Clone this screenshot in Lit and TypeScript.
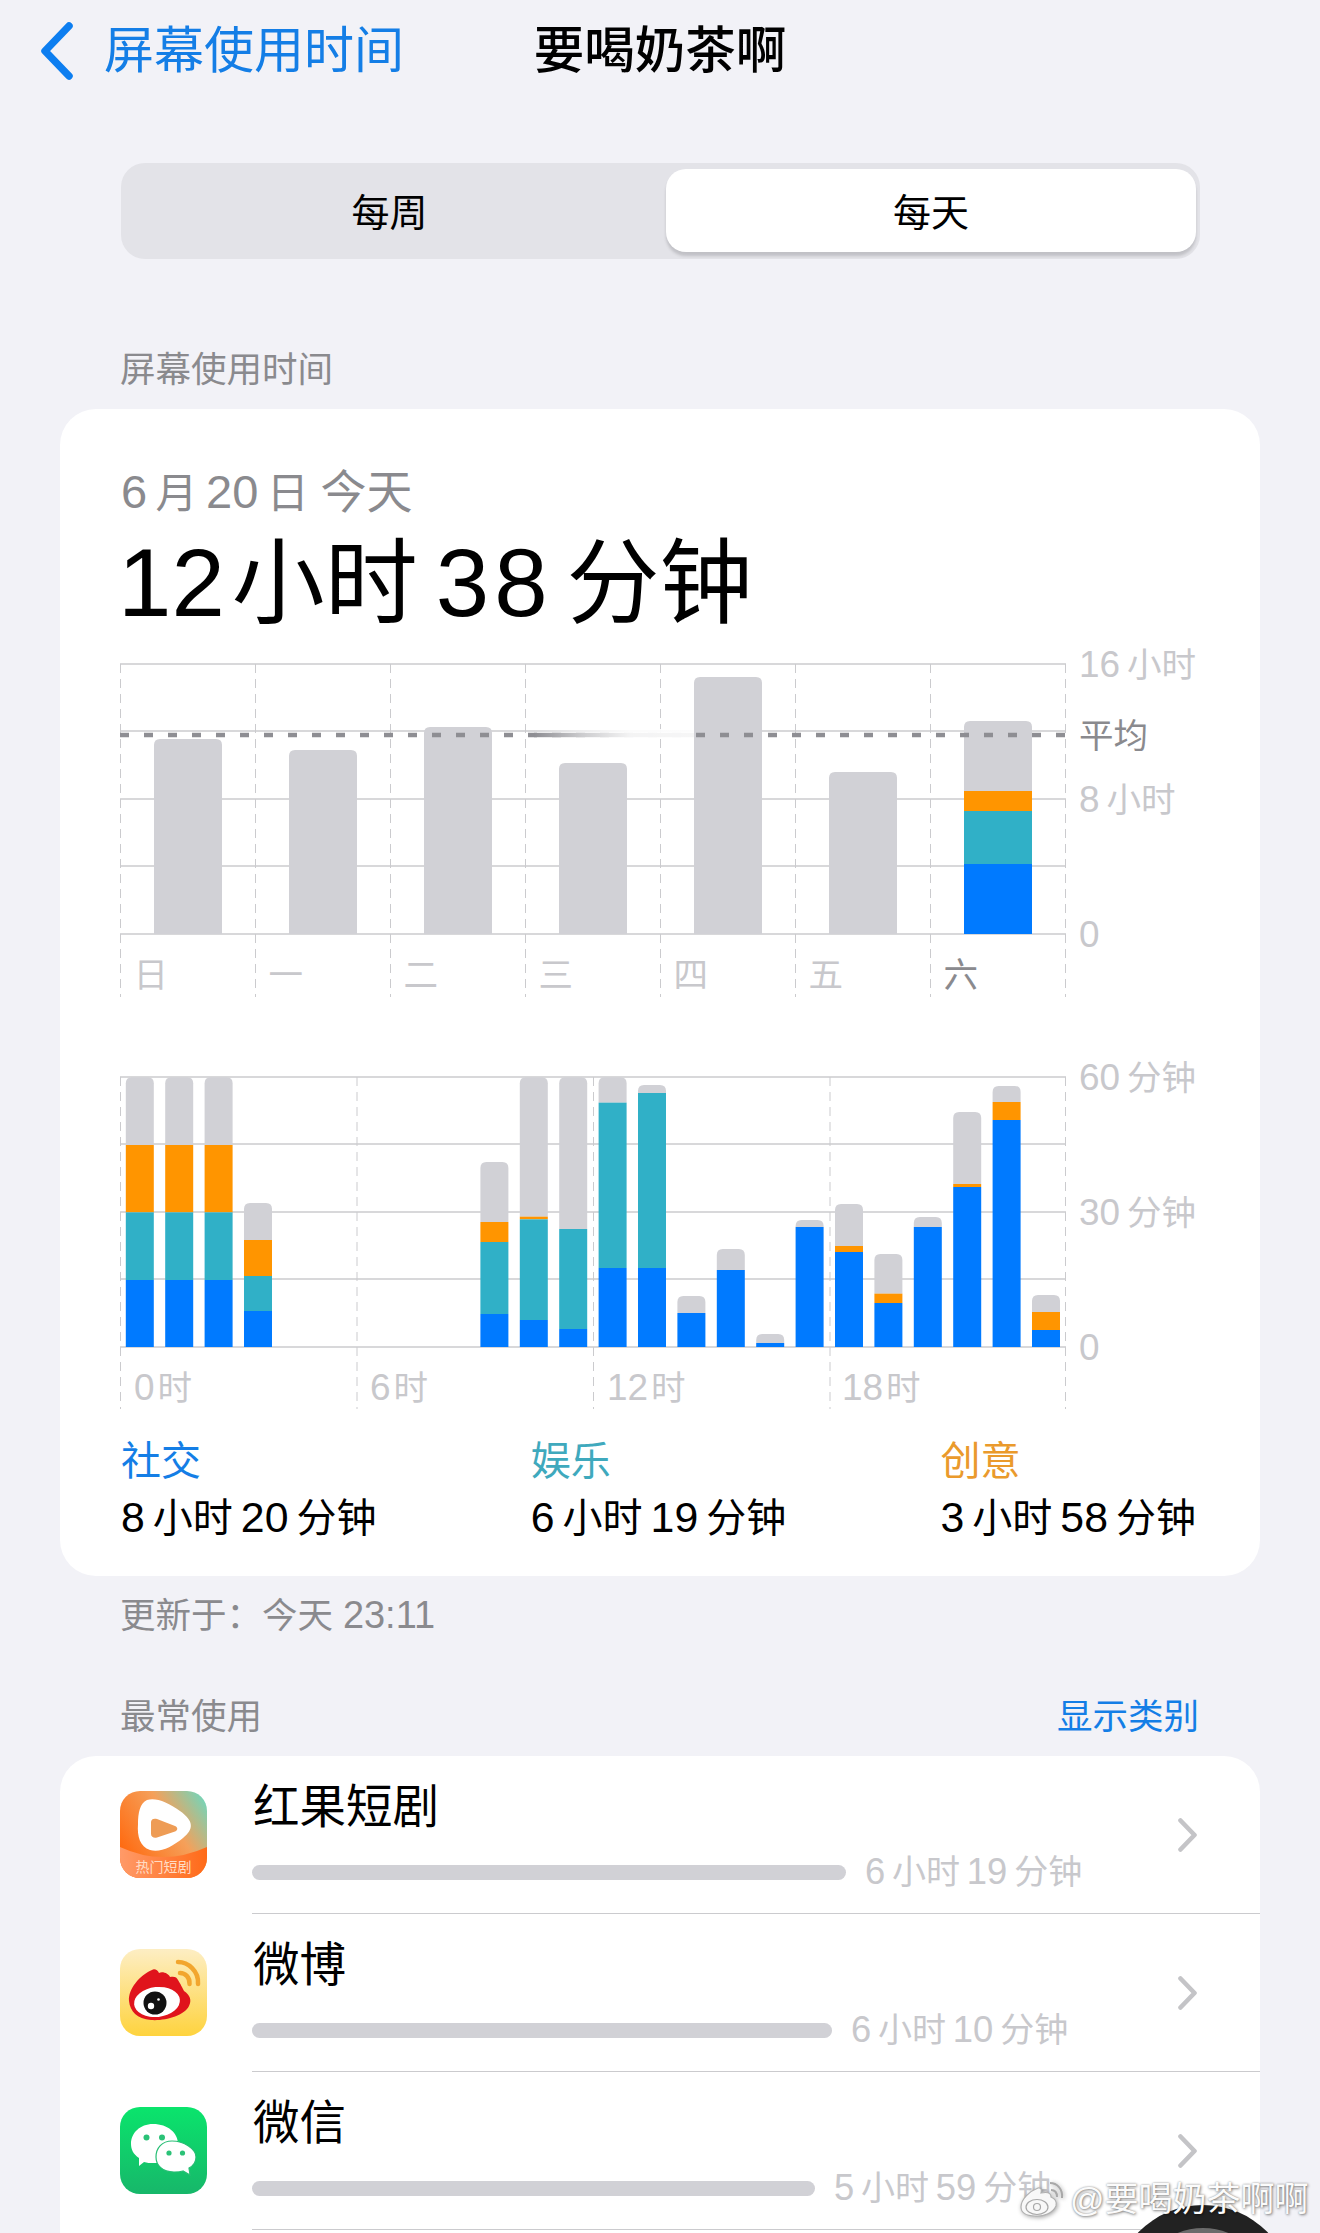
import { LitElement, html, svg, css } from "lit";
import { customElement } from "lit/decorators.js";

const BLUE = "#007aff", TEAL = "#30b0c7", ORANGE = "#ff9500", GRAY = "#d1d1d6";
const T = "\u2009";

type Seg = [string, number];

/** Wraps runs of digits so they take the Latin face, which is larger than the CJK one. */
const num = (s: string) =>
  s.split(/([\d:]+)/).map((p, i) => (i % 2 ? html`<span class="d">${p}</span>` : p));
const snum = (s: string) =>
  s.split(/([\d:]+)/).map((p, i) => (i % 2 ? svg`<tspan class="d">${p}</tspan>` : p));

function stack(x: number, w: number, bottom: number, r: number, segs: Seg[]) {
  return segs.map(([c, top], i) => {
    const end = i + 1 < segs.length ? segs[i + 1][1] : bottom;
    if (i === 0) {
      return svg`<path fill=${c} d="M${x} ${end}V${top + r}Q${x} ${top} ${x + r} ${top}H${x + w - r}Q${x + w} ${top} ${x + w} ${top + r}V${end}Z"/>`;
    }
    return svg`<rect fill=${c} x=${x} y=${top} width=${w} height=${end - top}/>`;
  });
}

const dayBars: [number, number, Seg[]][] = [
  [154, 739, []], [289, 750, []], [424, 727, []], [559, 763, []], [694, 677, []], [829, 772, []],
  [964, 721, [[ORANGE, 791], [TEAL, 811], [BLUE, 864]]],
];
const days = ["日", "一", "二", "三", "四", "五", "六"];
const dayX = [120.5, 255.5, 390.5, 525.5, 660.5, 795.5, 930.5, 1065.5];

const z = (v: number) => 1050 + v / 3;
const hours: [number, [string, number][]][] = [
  [0, [[GRAY, 82], [ORANGE, 285], [TEAL, 487], [BLUE, 690]]],
  [1, [[GRAY, 82], [ORANGE, 285], [TEAL, 487], [BLUE, 690]]],
  [2, [[GRAY, 82], [ORANGE, 285], [TEAL, 487], [BLUE, 690]]],
  [3, [[GRAY, 459], [ORANGE, 570], [TEAL, 678], [BLUE, 783]]],
  [9, [[GRAY, 336], [ORANGE, 516], [TEAL, 576], [BLUE, 792]]],
  [10, [[GRAY, 82], [ORANGE, 500], [TEAL, 508], [BLUE, 810]]],
  [11, [[GRAY, 82], [TEAL, 537], [BLUE, 837]]],
  [12, [[GRAY, 82], [TEAL, 158], [BLUE, 654]]],
  [13, [[GRAY, 105], [TEAL, 129], [BLUE, 654]]],
  [14, [[GRAY, 738], [BLUE, 789]]],
  [15, [[GRAY, 597], [BLUE, 660]]],
  [16, [[GRAY, 852], [BLUE, 879]]],
  [17, [[GRAY, 510], [BLUE, 531]]],
  [18, [[GRAY, 462], [ORANGE, 588], [BLUE, 606]]],
  [19, [[GRAY, 612], [ORANGE, 731], [BLUE, 759]]],
  [20, [[GRAY, 501], [BLUE, 531]]],
  [21, [[GRAY, 186], [ORANGE, 402], [BLUE, 411]]],
  [22, [[GRAY, 108], [ORANGE, 156], [BLUE, 210]]],
  [23, [[GRAY, 735], [ORANGE, 786], [BLUE, 840]]],
];

const hline = (y: number, x1 = 120, x2 = 1066) =>
  svg`<line class="grid" x1=${x1} x2=${x2} y1=${y} y2=${y}/>`;
const vline = (x: number, y1: number, y2: number) =>
  svg`<line class="dash" x1=${x} x2=${x} y1=${y1} y2=${y2}/>`;

const redfruit = html`<svg class="icon" viewBox="0 0 87 87">
  <defs>
    <linearGradient id="rf" x1="0" y1="0.65" x2="1" y2="0">
      <stop offset="0" stop-color="#ff6a10"/><stop offset="0.55" stop-color="#f5a05a"/><stop offset="1" stop-color="#62dcc6"/>
    </linearGradient>
    <linearGradient id="rb" x1="0" y1="0" x2="1" y2="0">
      <stop offset="0" stop-color="#ff9a68"/><stop offset="1" stop-color="#ff6a18"/>
    </linearGradient>
    <clipPath id="rc"><rect width="87" height="87" rx="20"/></clipPath>
  </defs>
  <g clip-path="url(#rc)">
    <rect width="87" height="87" fill="url(#rf)"/>
    <path d="M0 56Q43 76 87 56V87H0Z" fill="url(#rb)"/>
    <path d="M27 9C35 6 48 11 60 20C74 30 74 38 63 47C52 56 40 62 30 59C20 56 17 45 18 33C18 22 20 12 27 9Z" fill="#fff"/>
    <path d="M31 31C31 28 34 27 37 28L55 35C58 36.5 58 39 55 40.5L37 46.5C34 47.5 31 46 31 43Z" fill="#ee9c55"/>
    <text x="43.5" y="81" text-anchor="middle" class="rtxt">热门短剧</text>
  </g>
</svg>`;

const weibo = html`<svg class="icon" viewBox="0 0 87 87">
  <defs>
    <linearGradient id="wb" x1="0" y1="0" x2="0" y2="1">
      <stop offset="0" stop-color="#fdeec4"/><stop offset="1" stop-color="#fed33e"/>
    </linearGradient>
  </defs>
  <rect width="87" height="87" rx="20" fill="url(#wb)"/>
  <path d="M9 52C8 40 20 26 32 21C34 19 38 21 39 24C43 22 49 25 50 28C54 27 57 28 58 31C61 36 62 38 64 42C70 46 72 51 69 57C64 67 45 72 31 71C17 70 10 62 9 52Z" fill="#e0141c"/>
  <ellipse cx="37" cy="53" rx="23" ry="15" fill="#fff" transform="rotate(-6 37 53)"/>
  <circle cx="35" cy="54" r="11.5" fill="#111"/>
  <circle cx="31" cy="57" r="3.2" fill="#fff"/>
  <circle cx="38.5" cy="50.5" r="1.3" fill="#fff"/>
  <path d="M58 13C68 13 79 22 78 35" fill="none" stroke="#f2a62e" stroke-width="4.5" stroke-linecap="round"/>
  <path d="M60 24C65 24 70 28 69.5 35" fill="none" stroke="#f2a62e" stroke-width="4.5" stroke-linecap="round"/>
</svg>`;

const wechat = html`<svg class="icon" viewBox="0 0 87 87">
  <defs>
    <linearGradient id="wc" x1="0" y1="0" x2="0" y2="1">
      <stop offset="0" stop-color="#0ae46c"/><stop offset="1" stop-color="#17b76a"/>
    </linearGradient>
  </defs>
  <rect width="87" height="87" rx="20" fill="url(#wc)"/>
  <path d="M33 17C48 17 58 26 58 37C58 48 48 56 33 56C30 56 27 56 24 55L19 59L19 51C13 47 11 42 11 37C11 26 20 17 33 17Z" fill="#fff"/>
  <path d="M52 34C64 34 76 42 76 50C76 55 73 59 69 61L70 68L63 64C60 65 57 65 54 65C42 65 36 58 36 50C36 41 42 34 52 34Z" fill="#fff" stroke="#27be74" stroke-width="1.2"/>
  <circle cx="26.5" cy="30.5" r="3" fill="#2bc277"/><circle cx="42" cy="30.5" r="3" fill="#2bc277"/>
  <circle cx="49" cy="46" r="2.6" fill="#2bc277"/><circle cx="62.5" cy="46" r="2.6" fill="#2bc277"/>
</svg>`;

const chevron = html`<svg class="chev" viewBox="0 0 19 34"><path d="M2.5 2.5L16.5 17L2.5 31.5" fill="none" stroke="#c4c4c7" stroke-width="4.6" stroke-linecap="round" stroke-linejoin="round"/></svg>`;

const apps = [
  { name: "红果短剧", icon: redfruit, w: 594, time: `6${T}小时${T}19${T}分钟` },
  { name: "微博", icon: weibo, w: 580, time: `6${T}小时${T}10${T}分钟` },
  { name: "微信", icon: wechat, w: 563, time: `5${T}小时${T}59${T}分钟` },
];

@customElement("app-root")
export class AppRoot extends LitElement {
  static styles = css`
    :host { display: block; }
    .page {
      width: 1320px; height: 2233px; overflow: hidden; position: relative; background: #f2f2f7;
      font-family: "Liberation Sans", "Noto Sans CJK SC", sans-serif; color: #000;
    }
    .d { font-family: "Liberation Sans", sans-serif; font-size: 1.07em; }
    .nav { height: 99px; box-sizing: border-box; padding-top: 2px; display: grid; grid-template-columns: 1fr auto 1fr; align-items: center; }
    .back { display: flex; align-items: center; padding-left: 38px; gap: 30px; color: #147ee6; font-size: 50px; line-height: 56px; }
    .back svg { width: 36px; height: 60px; display: block; }
    .title { font-size: 50.5px; line-height: 56px; font-weight: 500; }
    .seg {
      margin: 64px 120px 0 121px; height: 96px; box-sizing: border-box; padding: 6px 4px 7px 0;
      background: #e3e3e8; border-radius: 24px; display: grid; grid-template-columns: 545px 530px;
    }
    .seg div { display: flex; align-items: center; justify-content: center; font-size: 38px; padding-bottom: 2px; }
    .seg div:first-child { padding-right: 8px; }
    .seg .on { background: #fff; border-radius: 20px; box-shadow: 0 4px 3px rgba(60, 60, 67, 0.2); }
    .section { font-size: 35.5px; line-height: 42px; color: #8a8a8e; padding-left: 120px; }
    .s1 { margin-top: 90px; }
    .card { margin: 18px 60px 0; background: #fff; border-radius: 36px; }
    .c1 { height: 1167px; padding-top: 56px; box-sizing: border-box; }
    .date { font-size: 42px; line-height: 54px; color: #8a8a8e; padding-left: 61px; white-space: nowrap; }
    .date .d { font-size: 1.12em; }
    .date .today { font-size: 46px; }
    .big { display: flex; align-items: baseline; height: 100px; font-size: 93px; line-height: 100px; margin-top: 12px; padding-left: 58px; white-space: nowrap; }
    .big .d { font-size: 96px; }
    .big .g1 { margin-left: 7px; }
    .big .g2 { margin-left: 18px; letter-spacing: 5px; }
    .big .g3 { margin-left: 14px; }
    svg.chart { display: block; width: 1200px; overflow: visible; }
    svg.c-a { height: 360px; margin-top: 17px; }
    svg.c-b { height: 370px; margin-top: 40px; }
    svg text { font-family: "Liberation Sans", "Noto Sans CJK SC", sans-serif; }
    .grid { stroke: #cbcbce; stroke-width: 1.5; }
    .dash { stroke: #cbcbce; stroke-width: 1; stroke-dasharray: 9 6; }
    .axis { font-size: 34.5px; fill: #c8c8cc; }
    .axis.dark { fill: #8a8a8e; }
    .legend { display: flex; justify-content: space-between; padding: 13px 64px 0 61px; }
    .legend .k { font-size: 40px; line-height: 56px; }
    .legend .v { font-size: 40px; line-height: 57px; white-space: nowrap; }
    .foot { font-size: 35.5px; line-height: 42px; color: #8a8a8e; padding: 18px 0 0 120px; white-space: nowrap; }
    .head2 { display: flex; justify-content: space-between; padding: 59px 121px 0 120px; font-size: 35.5px; line-height: 42px; color: #8a8a8e; }
    .head2 a { color: #147ee6; }
    .c2 { margin-top: 18px; height: 600px; padding-top: 0; }
    .row { height: 158px; display: grid; grid-template-columns: 60px 87px 45px 1fr; position: relative; }
    .icon { grid-column: 2; width: 87px; height: 87px; margin-top: 35px; display: block; }
    .rtxt { font-size: 14px; fill: #ffdcc4; font-family: "Noto Sans CJK SC", sans-serif; }
    .main {
      grid-column: 4; border-bottom: 1.5px solid #cbcbce; box-sizing: border-box; padding: 24px 63px 0 0;
      display: grid; grid-template-columns: 1fr 19px; align-content: start;
    }
    .name { font-size: 46.5px; line-height: 54px; padding-left: 1px; }
    .meter { display: flex; align-items: center; gap: 19px; margin-top: 18px; }
    .bar { height: 15px; border-radius: 8px; background: #d1d1d6; }
    .time { font-size: 34px; line-height: 40px; color: #c8c8cc; white-space: nowrap; }
    .chev { width: 19px; height: 34px; margin-top: 38px; grid-column: 2; grid-row: 1 / span 2; }
    .mark {
      position: absolute; left: 1018px; top: 2178px; display: flex; align-items: center; gap: 5px;
      font-size: 34px; line-height: 40px; color: #fbfbfb; white-space: nowrap;
      text-shadow: 1px 1px 3px rgba(0, 0, 0, 0.45), 0 0 2px rgba(0, 0, 0, 0.35);
    }
    .mark svg { width: 47px; height: 42px; display: block; filter: drop-shadow(1px 1px 2px rgba(0, 0, 0, 0.35)); }
    .blob { position: absolute; left: 1113px; top: 2205px; width: 180px; height: 180px; border-radius: 50%; background: #222; }
    .blob::after { content: ""; position: absolute; left: 23px; top: 23px; width: 134px; height: 134px; border-radius: 50%; background: #6b6b6b; }
  `;

  render() {
    return html`<div class="page">
      <div class="nav">
        <div class="back">
          <svg viewBox="0 0 36 60"><path d="M31 5L7 30L31 55" fill="none" stroke="#0d7ef0" stroke-width="7.5" stroke-linecap="round" stroke-linejoin="round"/></svg>
          <span>屏幕使用时间</span>
        </div>
        <div class="title">要喝奶茶啊</div>
        <div></div>
      </div>

      <div class="seg"><div>每周</div><div class="on">每天</div></div>

      <div class="section s1">屏幕使用时间</div>
      <div class="card c1">
        <div class="date">${num(`6${T}月${T}20${T}日`)} <span class="today">今天</span></div>
        <div class="big"><span class="d">12</span><span class="g1">小时</span><span class="d g2">38</span><span class="g3">分钟</span></div>

        <svg class="chart c-a" viewBox="60 650 1200 360">
          ${[664, 731, 799, 866, 934].map((y) => hline(y))}
          ${dayX.map((x) => vline(x, 664, 997))}
          ${dayBars.map(([x, top, segs]) => stack(x, 68, 934, 6, [[GRAY, top], ...segs]))}
          <defs>
            <linearGradient id="fade" x1="0" x2="1" y1="0" y2="0">
              <stop offset="0" stop-color="#fff" stop-opacity="0"/>
              <stop offset="0.3" stop-color="#fff" stop-opacity="0.55"/>
              <stop offset="0.6" stop-color="#fff" stop-opacity="0.9"/>
              <stop offset="1" stop-color="#fff" stop-opacity="0.92"/>
            </linearGradient>
          </defs>
          <line x1="120" x2="1066" y1="735" y2="735" stroke="#8e8e93" stroke-width="4.4" stroke-dasharray="9 15"/>
          <rect x="534" y="732.8" width="160" height="4.4" fill="#8e8e93"/>
          <rect x="534" y="729" width="160" height="10" fill="url(#fade)"/>
          <text class="axis" x="1079" y="677">${snum(`16${T}小时`)}</text>
          <text class="axis dark" x="1079" y="748">平均</text>
          <text class="axis" x="1079" y="812">${snum(`8${T}小时`)}</text>
          <text class="axis" x="1079" y="947">${snum("0")}</text>
          ${days.map((d, i) => svg`<text class="axis ${i === 6 ? "dark" : ""}" x=${dayX[i] + 13} y="987">${d}</text>`)}
        </svg>

        <svg class="chart c-b" viewBox="60 1050 1200 370">
          ${[1077, 1144, 1212, 1279, 1347].map((y) => hline(y))}
          ${[120.5, 357, 593.5, 830, 1065.5].map((x) => vline(x, 1077, 1409))}
          ${hours.map(([i, segs]) => stack(125.8 + i * 39.4, 28, 1347, 6, segs.map(([c, v]) => [c, z(v)] as Seg)))}
          <text class="axis" x="1079" y="1090">${snum(`60${T}分钟`)}</text>
          <text class="axis" x="1079" y="1225">${snum(`30${T}分钟`)}</text>
          <text class="axis" x="1079" y="1360">${snum("0")}</text>
          ${([["0", 134], ["6", 370], ["12", 607], ["18", 842]] as [string, number][]).map(([h, x]) => svg`<text class="axis" x=${x} y="1400"><tspan class="d">${h}</tspan><tspan dx="3">时</tspan></text>`)}
        </svg>

        <div class="legend">
          <div><div class="k" style="color:#147ee6">社交</div><div class="v">${num(`8${T}小时${T}20${T}分钟`)}</div></div>
          <div><div class="k" style="color:#3fa9bd">娱乐</div><div class="v">${num(`6${T}小时${T}19${T}分钟`)}</div></div>
          <div><div class="k" style="color:#ea9a2c">创意</div><div class="v">${num(`3${T}小时${T}58${T}分钟`)}</div></div>
        </div>
      </div>

      <div class="foot">${num("更新于：今天 23:11")}</div>
      <div class="head2"><span>最常使用</span><a>显示类别</a></div>

      <div class="card c2">
        ${apps.map((a) => html`<div class="row">
          ${a.icon}
          <div class="main">
            <div class="name">${a.name}</div>
            <div class="meter"><div class="bar" style="width:${a.w}px"></div><div class="time">${num(a.time)}</div></div>
            ${chevron}
          </div>
        </div>`)}
      </div>

      <div class="blob"></div>
      <div class="mark">
        <svg viewBox="0 0 47 42">
          <path d="M3 29C3 21 12 13 20 10C23 9 24 12 23 15C28 14 33 14 33 19C38 21 39 24 38 28C35 35 25 39 17 38C9 38 3 35 3 29Z" fill="#f8f8f8" stroke="#b0b0b0" stroke-width="1.2"/>
          <ellipse cx="19" cy="29" rx="11" ry="7.5" fill="none" stroke="#a8a8a8" stroke-width="1.2"/>
          <circle cx="19" cy="29" r="3.5" fill="none" stroke="#a8a8a8" stroke-width="1.2"/>
          <path d="M32 5C39 5 45 11 44 20M33 12C37 12 39 15 39 19" fill="none" stroke="#a8a8a8" stroke-width="2"/>
        </svg>
        <span>@要喝奶茶啊啊</span>
      </div>
    </div>`;
  }
}
